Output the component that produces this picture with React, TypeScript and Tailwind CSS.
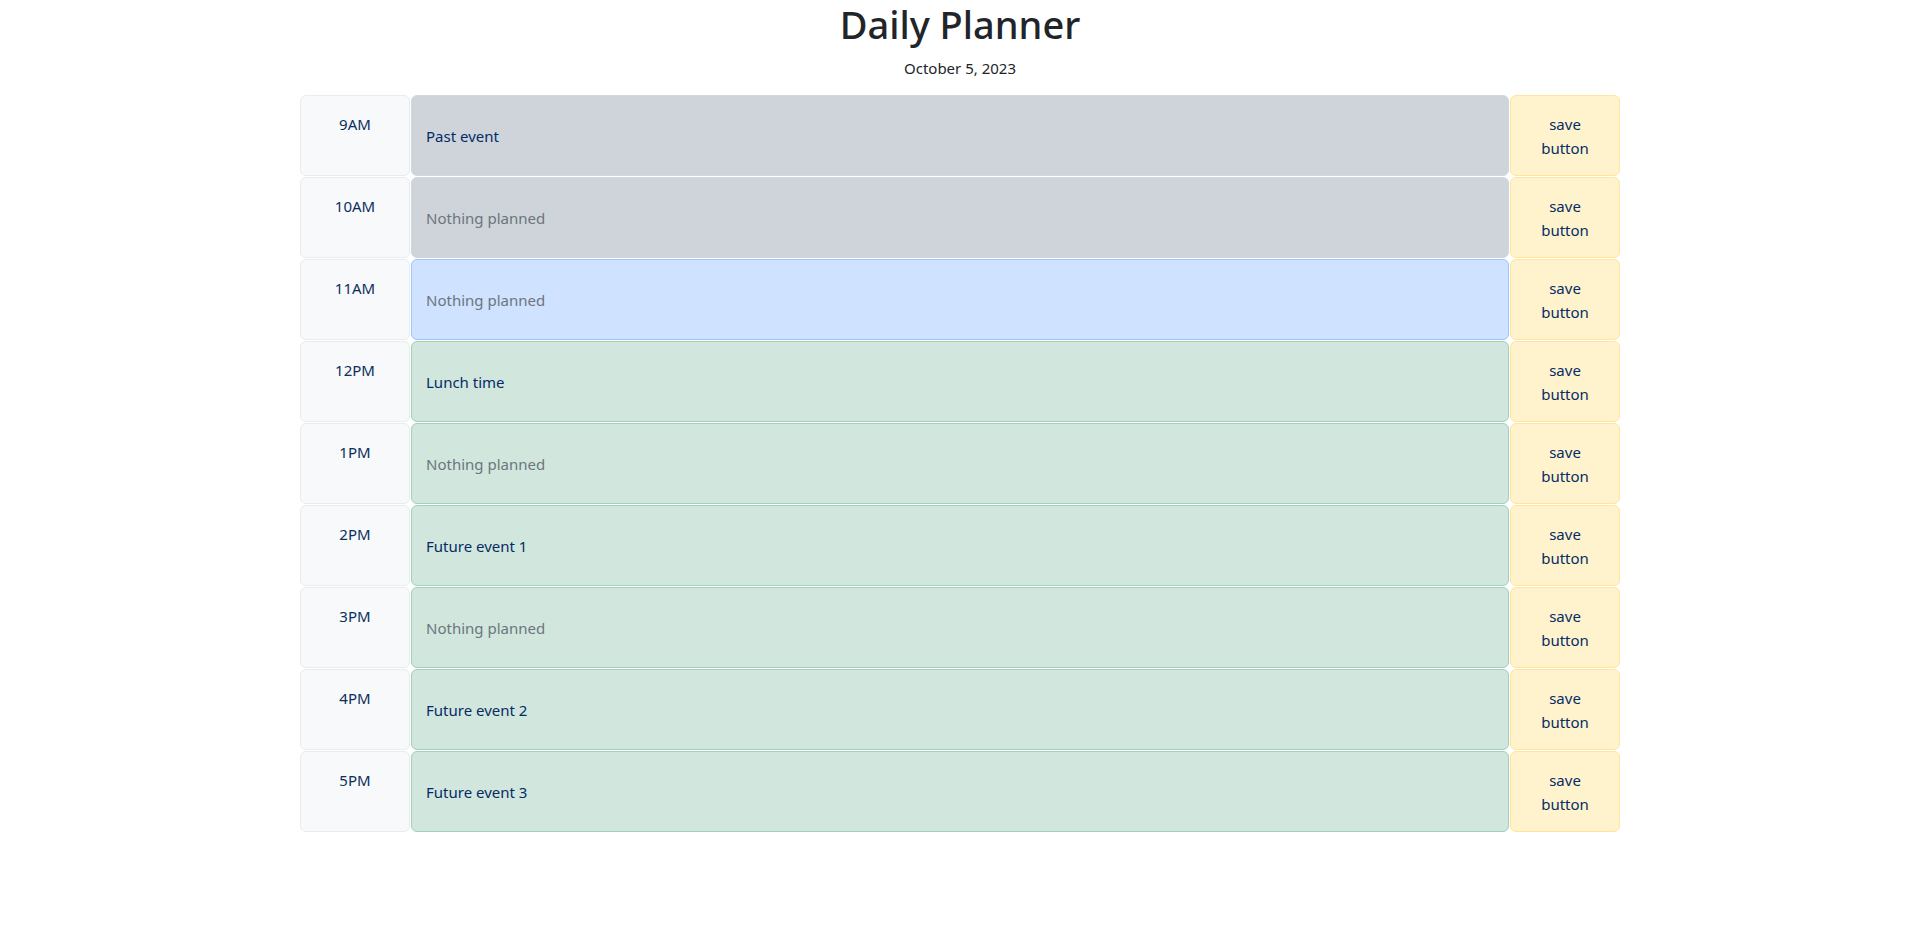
import { useState } from 'react'

type Slot = { hour: string; text: string; state: 'past' | 'present' | 'future' }

const SLOTS: Slot[] = [
  { hour: '9AM', text: 'Past event', state: 'past' },
  { hour: '10AM', text: '', state: 'past' },
  { hour: '11AM', text: '', state: 'present' },
  { hour: '12PM', text: 'Lunch time', state: 'future' },
  { hour: '1PM', text: '', state: 'future' },
  { hour: '2PM', text: 'Future event 1', state: 'future' },
  { hour: '3PM', text: '', state: 'future' },
  { hour: '4PM', text: 'Future event 2', state: 'future' },
  { hour: '5PM', text: 'Future event 3', state: 'future' },
]

// colour per time state
const STATE_CLASS = {
  past: 'bg-[#ced4da] border-[#d3d7dc]',
  present: 'bg-[#cfe2ff] border-[#9ec5fe]',
  future: 'bg-[#d1e7dd] border-[#a3cfbb]',
}

function Row({ slot }: { slot: Slot }) {
  const [value, setValue] = useState(slot.text)

  return (
    <>
      <div className="h-[81px] rounded-md border border-[#e9ecef] bg-[#f8f9fa] pt-4 text-center text-[15px] leading-6 text-[#0b2f5e]">
        {slot.hour}
      </div>
      <textarea
        value={value}
        onChange={(e) => setValue(e.target.value)}
        placeholder="Nothing planned"
        className={`h-[81px] resize-none rounded-md border px-[14px] pt-[28px] text-[15px] leading-6 text-[#052c65] outline-none placeholder:text-[#6c757d] ${STATE_CLASS[slot.state]}`}
      />
      <button className="flex h-[81px] items-center justify-center rounded-md border border-[#ffe69c] bg-[#fff3cd] px-6 text-center text-[15px] leading-6 text-[#052c65]">
        save button
      </button>
    </>
  )
}

export default function App() {
  return (
    <div className="min-h-screen bg-white pl-[6px] font-['Noto_Sans',sans-serif] text-[#212529]">
      <header className="text-center">
        <h1 className="text-[38px] font-medium leading-[48px]">Daily Planner</h1>
        <p className="mt-2 text-[15px] leading-6">October 5, 2023</p>
      </header>

      <div className="mx-auto mt-[15px] grid w-[1320px] grid-cols-[110px_1fr_110px] gap-px">
        {SLOTS.map((slot) => (
          <Row key={slot.hour} slot={slot} />
        ))}
      </div>
    </div>
  )
}
